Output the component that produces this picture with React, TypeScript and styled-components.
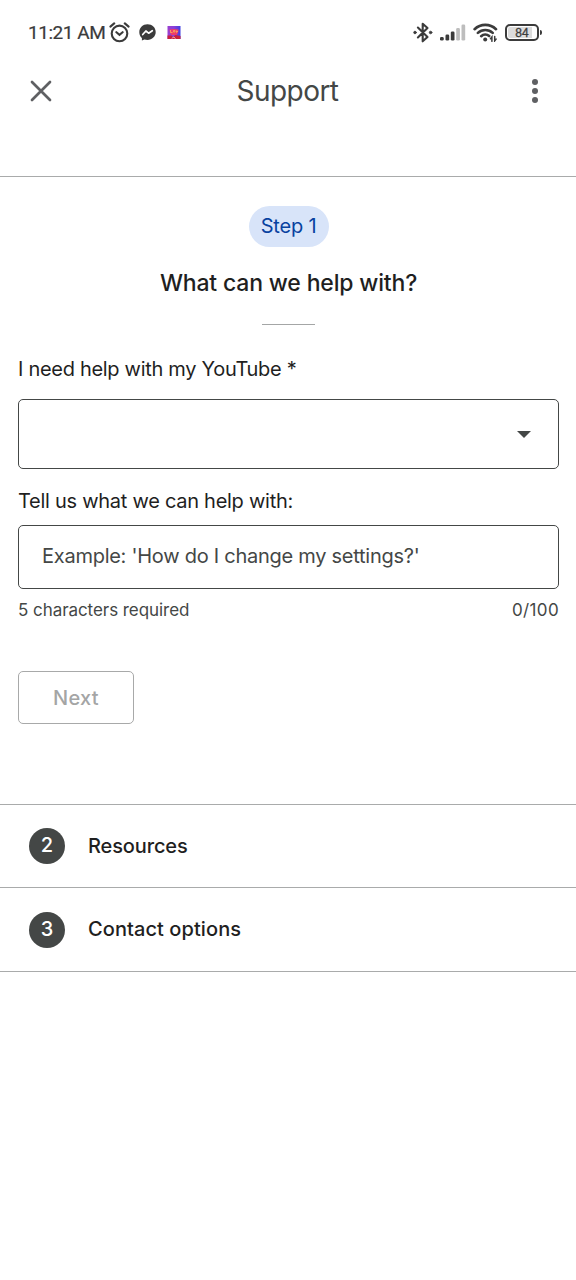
import React from "react";
import styled, { createGlobalStyle } from "styled-components";

const GlobalStyle = createGlobalStyle`
  * { box-sizing: border-box; }
  body { margin: 0; background: #fff; font-family: "Google Sans", Inter, Roboto, sans-serif; color: #1f1f1f; }
  button, input { font: inherit; margin: 0; }
`;

const Screen = styled.div`
  width: 576px;
  min-height: 1280px;
  background: #fff;
  overflow: hidden;
`;

const StatusBar = styled.div`
  height: 64px;
  padding: 0 34px 0 28px;
  display: flex;
  justify-content: space-between;
  align-items: center;
  color: #3b3b3b;
`;

const StatusGroup = styled.div<{ $gap: number }>`
  display: flex;
  align-items: center;
  gap: ${(p) => p.$gap}px;
  svg { display: block; }
`;

const Clock = styled.span`
  width: 77px;
  font: 400 19px/24px Roboto, sans-serif;
  letter-spacing: -0.45px;
  padding-top: 1px;
  white-space: nowrap;
  -webkit-text-stroke: 0.2px #3b3b3b;
`;

const AppBar = styled.header`
  height: 113px;
  padding: 0 30px;
  border-bottom: 1px solid #a9abab;
  display: grid;
  grid-template-columns: 22px 1fr 22px;
  align-items: start;
`;

const IconButton = styled.button<{ $end?: boolean }>`
  height: 54px;
  padding: 0;
  border: 0;
  background: none;
  color: #5f6063;
  display: flex;
  align-items: center;
  justify-content: ${(p) => (p.$end ? "center" : "flex-start")};
`;

const ScreenTitle = styled.h1`
  margin: 0;
  padding-right: 1px;
  text-align: center;
  font-weight: 400;
  font-size: 28px;
  line-height: 54px;
  letter-spacing: -0.55px;
  color: #444746;
`;

const Form = styled.form`
  height: 627px;
  padding: 29px 17px 0 18px;
  display: flex;
  flex-direction: column;
`;

const StepChip = styled.span`
  align-self: center;
  width: 80px;
  height: 41px;
  border-radius: 21px;
  background: #d8e4f9;
  color: #0842a0;
  text-align: center;
  font-size: 20px;
  line-height: 40px;
  letter-spacing: -0.2px;
`;

const Question = styled.h2`
  margin: 20px 0 0;
  text-align: center;
  font-weight: 500;
  font-size: 23px;
  line-height: 32px;
  letter-spacing: -0.17px;
`;

const Rule = styled.hr`
  width: 53px;
  margin: 25px auto 0;
  border: 0;
  border-top: 1px solid #a4a6a6;
`;

const Label = styled.label<{ $top: number; $spacing: number }>`
  margin-top: ${(p) => p.$top}px;
  font-size: 20px;
  line-height: 28px;
  letter-spacing: ${(p) => p.$spacing}px;
`;

const Select = styled.button`
  margin-top: 16px;
  height: 70px;
  padding: 0 27px;
  border: 1px solid #444746;
  border-radius: 5px;
  background: #fff;
  display: flex;
  align-items: center;
  justify-content: flex-end;
`;

const TextField = styled.input`
  margin-top: 10px;
  height: 64px;
  padding: 0 23px 2px;
  border: 1px solid #444746;
  border-radius: 5px;
  background: #fff;
  font-size: 20px;
  letter-spacing: -0.26px;
  &::placeholder { color: #444746; opacity: 1; }
`;

const Hints = styled.div`
  margin-top: 9px;
  display: flex;
  justify-content: space-between;
  font-size: 17px;
  line-height: 24px;
  color: #444746;
`;

const Hint = styled.span<{ $spacing: number }>`
  letter-spacing: ${(p) => p.$spacing}px;
`;

const NextButton = styled.button`
  margin-top: 49px;
  width: 116px;
  height: 53px;
  padding: 0;
  border: 1px solid #a8a9a9;
  border-radius: 5px;
  background: #fff;
  color: #a4a5a5;
  font-weight: 500;
  font-size: 20px;
  letter-spacing: 0.3px;
`;

const StepRow = styled.div<{ $height: number }>`
  height: ${(p) => p.$height}px;
  padding-left: 29px;
  border-bottom: 1px solid #a9abab;
  display: flex;
  align-items: center;
  gap: 23px;
`;

const StepList = styled.section`
  border-top: 1px solid #a9abab;
`;

const StepNumber = styled.span`
  width: 36px;
  height: 36px;
  border-radius: 50%;
  background: #444746;
  color: #fff;
  text-align: center;
  font-weight: 500;
  font-size: 20px;
  line-height: 35px;
`;

const StepName = styled.span<{ $spacing: number }>`
  font-weight: 500;
  font-size: 20px;
  line-height: 28px;
  padding-bottom: 1px;
  letter-spacing: ${(p) => p.$spacing}px;
`;

const AlarmIcon = () => (
  <svg width="21" height="21" viewBox="0 0 21 21" fill="none" stroke="currentColor" strokeWidth="2.1" strokeLinecap="round">
    <circle cx="10.5" cy="11.4" r="7.8" />
    <path d="M1.4 4.6 5.2 1.4M19.6 4.6 15.8 1.4M7.4 10.2l3.1 2.6 3.1-2.6" />
  </svg>
);

const MessengerIcon = () => (
  <svg width="17" height="17" viewBox="0 0 17 17">
    <path d="M8.5.3C3.9.3.3 3.7.3 8.2c0 2.4 1 4.5 2.6 5.9v2.5l2.5-1.2c1 .3 2 .5 3.1.5 4.6 0 8.2-3.3 8.2-7.8S13.1.3 8.5.3Z" fill="currentColor" />
    <path d="m3.7 10.5 3.2-3.5 2.7 2.2 3.7-2.5" fill="none" stroke="#fff" strokeWidth="1.7" strokeLinejoin="round" strokeLinecap="round" />
  </svg>
);

const GameIcon = () => (
  <svg width="14" height="13" viewBox="0 0 14 13">
    <defs>
      <linearGradient id="game" x1="0" y1="0" x2="1" y2="0">
        <stop offset="0" stopColor="#9a3fd0" />
        <stop offset=".5" stopColor="#8a3fd8" />
        <stop offset="1" stopColor="#3f3fe0" />
      </linearGradient>
    </defs>
    <path d="M.5 0h13v13H.5z" fill="url(#game)" />
    <path d="M2.5 3.5 7 3l4.500.5-.5 3.500L9.500 9h-5L3 7z" fill="#ee3b69" />
    <path d="M3.500 4v2.500h2M6.500 4.500H8V6H6.500zM9.500 4.500v2L11 5" fill="none" stroke="#f6a35b" strokeWidth=".9" />
    <path d="M.5 9.500h4L6 11l2.500-2 5 1v3H.5z" fill="#c81f3d" />
    <path d="m5 12.500 1.500-1.500 2 1.500" fill="none" stroke="#f3c1b8" strokeWidth="1" />
  </svg>
);

const BluetoothIcon = () => (
  <svg width="20" height="21" viewBox="0 0 20 21" fill="none" stroke="currentColor" strokeWidth="2.1" strokeLinejoin="round" strokeLinecap="round">
    <path d="m4.9 5.6 9.6 9.4-4.8 4.3V1.7L14.5 6l-9.600 9.400" />
    <circle cx="2" cy="10.5" r="1.3" fill="currentColor" strokeWidth=".8" />
    <circle cx="17.6" cy="10.5" r="1.3" fill="currentColor" strokeWidth=".8" />
  </svg>
);

const SignalIcon = () => (
  <svg width="26" height="17" viewBox="0 0 26 17" fill="currentColor">
    <rect x="0" y="13" width="3.7" height="3.5" rx="1.3" />
    <rect x="5.5" y="10.5" width="3.7" height="6" rx="1.3" />
    <rect x="10.8" y="7.5" width="3.7" height="9" rx="1.3" />
    <rect x="16.2" y="4" width="3.7" height="12.5" rx="1.3" fill="#bdbdbd" />
    <rect x="21.5" y=".5" width="3.7" height="16" rx="1.3" fill="#bdbdbd" />
  </svg>
);

const WifiIcon = () => (
  <svg width="25" height="19" viewBox="0 0 25 19" fill="none" stroke="currentColor" strokeWidth="2.6" strokeLinecap="round">
    <path d="M1.600 6.200a15.500 15.500 0 0 1 21.400 0M4.900 9.900a10.800 10.800 0 0 1 14.800 0M8.200 13.200a6 6 0 0 1 8-.2" />
    <circle cx="12.2" cy="16.5" r="2" fill="currentColor" stroke="none" />
    <path d="M18.900 18.300v-4.300l-1.400 1.800M21.700 13.600v4.300l1.400-1.800" strokeWidth="1.5" />
  </svg>
);

const BatteryShape = styled.div`
  width: 34px;
  height: 17px;
  border: 2px solid #3b3b3b;
  border-radius: 5px;
  background: linear-gradient(90deg, #dcdcdc 82%, #fff 82%);
  box-shadow: inset 0 0 0 1px #fff;
  text-align: center;
  font: 400 12px/14px "Liberation Sans", sans-serif;
  -webkit-text-stroke: 0.3px #3b3b3b;
`;

const BatteryTip = styled.span`
  width: 2px;
  height: 5px;
  border-radius: 0 2px 2px 0;
  background: #3b3b3b;
`;

export default function App() {
  return (
    <Screen>
      <GlobalStyle />
      <StatusBar>
        <StatusGroup $gap={4}>
          <Clock>11:21 AM</Clock>
          <StatusGroup $gap={9}>
            <AlarmIcon />
            <StatusGroup $gap={11}>
              <MessengerIcon />
              <GameIcon />
            </StatusGroup>
          </StatusGroup>
        </StatusGroup>
        <StatusGroup $gap={7}>
          <BluetoothIcon />
          <SignalIcon />
          <WifiIcon />
          <StatusGroup $gap={1}>
            <BatteryShape>84</BatteryShape>
            <BatteryTip />
          </StatusGroup>
        </StatusGroup>
      </StatusBar>

      <AppBar>
        <IconButton aria-label="Close">
          <svg width="22" height="22" viewBox="0 0 22 22" stroke="currentColor" strokeWidth="2.7" strokeLinecap="round">
            <path d="m2 2 18 18M20 2 2 20" />
          </svg>
        </IconButton>
        <ScreenTitle>Support</ScreenTitle>
        <IconButton aria-label="More options" $end>
          <svg width="6" height="24" viewBox="0 0 6 24" fill="currentColor">
            <circle cx="3" cy="3" r="3" />
            <circle cx="3" cy="12" r="3" />
            <circle cx="3" cy="21" r="3" />
          </svg>
        </IconButton>
      </AppBar>

      <Form>
        <StepChip>Step 1</StepChip>
        <Question>What can we help with?</Question>
        <Rule />
        <Label $top={30} $spacing={-0.3}>I need help with my YouTube *</Label>
        <Select type="button" aria-label="Product">
          <svg width="14" height="7" viewBox="0 0 14 7">
            <path d="M0 0h14L7 7z" fill="#444746" />
          </svg>
        </Select>
        <Label $top={18} $spacing={-0.27}>Tell us what we can help with:</Label>
        <TextField placeholder="Example: 'How do I change my settings?'" />
        <Hints>
          <Hint $spacing={-0.06}>5 characters required</Hint>
          <Hint $spacing={0.35}>0/100</Hint>
        </Hints>
        <NextButton type="button" disabled>Next</NextButton>
      </Form>

      <StepList>
        <StepRow $height={83}>
          <StepNumber>2</StepNumber>
          <StepName $spacing={-0.12}>Resources</StepName>
        </StepRow>
        <StepRow $height={84}>
          <StepNumber>3</StepNumber>
          <StepName $spacing={0.08}>Contact options</StepName>
        </StepRow>
      </StepList>
    </Screen>
  );
}
